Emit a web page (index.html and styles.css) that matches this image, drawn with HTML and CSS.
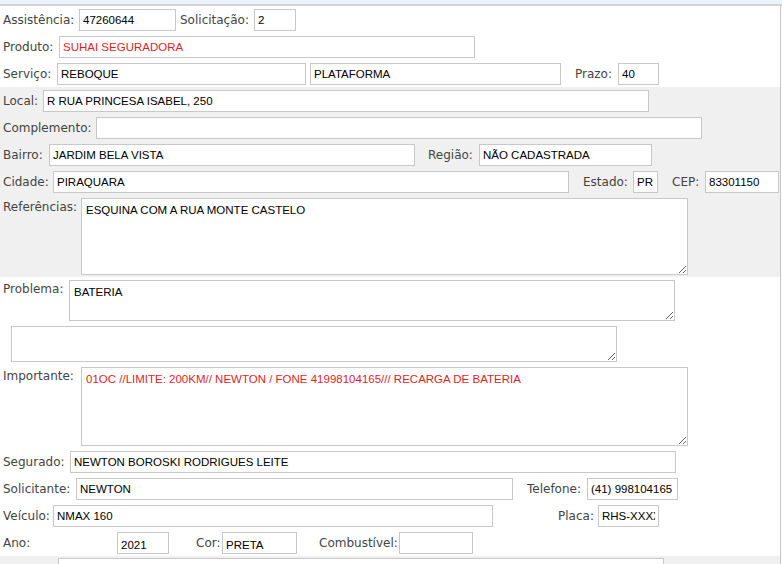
FILE: index.html
```html
<!DOCTYPE html>
<html lang="pt-BR">
<head>
<meta charset="utf-8">
<title>Assistência</title>
<link rel="stylesheet" href="styles.css">
</head>
<body>
<div class="topbar"></div>
<div class="page">
  <div class="sec">
    <div class="row">
      <label class="lbl l-assist">Assistência:</label>
      <input class="f w-assist" value="47260644">
      <label class="lbl l-solic ml4">Solicitação:</label>
      <input class="f w-solic" value="2">
    </div>
    <div class="row">
      <label class="lbl l-prod">Produto:</label>
      <input class="f w-prod red" value="SUHAI SEGURADORA">
    </div>
    <div class="row">
      <label class="lbl l-serv">Serviço:</label>
      <input class="f w-serv1" value="REBOQUE">
      <input class="f w-serv2 ml4" value="PLATAFORMA">
      <label class="lbl l-prazo ml14">Prazo:</label>
      <input class="f w-prazo" value="40">
    </div>
  </div>

  <div class="sec gray">
    <div class="row">
      <label class="lbl l-local">Local:</label>
      <input class="f w-606" value="R RUA PRINCESA ISABEL, 250">
    </div>
    <div class="row">
      <label class="lbl l-compl">Complemento:</label>
      <input class="f w-606" value="">
    </div>
    <div class="row">
      <label class="lbl l-bairro">Bairro:</label>
      <input class="f w-bairro" value="JARDIM BELA VISTA">
      <label class="lbl l-regiao ml13">Região:</label>
      <input class="f w-regiao" value="NÃO CADASTRADA">
    </div>
    <div class="row">
      <label class="lbl l-cidade">Cidade:</label>
      <input class="f w-cidade" value="PIRAQUARA">
      <label class="lbl l-estado ml14">Estado:</label>
      <input class="f w-estado" value="PR">
      <label class="lbl l-cep ml14">CEP:</label>
      <input class="f w-cep" value="83301150">
    </div>
    <div class="row top">
      <label class="lbl l-ref">Referências:</label>
      <textarea class="ta w-607 h-ref">ESQUINA COM A RUA MONTE CASTELO</textarea>
    </div>
  </div>

  <div class="sec">
    <div class="row top">
      <label class="lbl l-prob">Problema:</label>
      <textarea class="ta w-606 h-prob">BATERIA</textarea>
    </div>
    <div class="row top">
      <textarea class="ta w-606 h-blank ml11"></textarea>
    </div>
    <div class="row top">
      <label class="lbl l-imp">Importante:</label>
      <textarea class="ta w-607 h-imp red">01OC //LIMITE: 200KM// NEWTON / FONE 41998104165/// RECARGA DE BATERIA</textarea>
    </div>
    <div class="row">
      <label class="lbl l-seg">Segurado:</label>
      <input class="f w-606" value="NEWTON BOROSKI RODRIGUES LEITE">
    </div>
    <div class="row">
      <label class="lbl l-solicit">Solicitante:</label>
      <input class="f w-solicit" value="NEWTON">
      <label class="lbl l-tel ml14">Telefone:</label>
      <input class="f w-tel" value="(41) 998104165">
    </div>
    <div class="row">
      <label class="lbl l-veic">Veículo:</label>
      <input class="f w-veic" value="NMAX 160">
      <label class="lbl l-placa ml65">Placa:</label>
      <input class="f w-placa" value="RHS-XXXX">
    </div>
    <div class="row">
      <label class="lbl l-ano">Ano:</label>
      <input class="f w-ano low" value="2021">
      <label class="lbl l-cor ml27">Cor:</label>
      <input class="f w-cor low" value="PRETA">
      <label class="lbl l-comb ml22">Combustível:</label>
      <input class="f w-comb" value="">
    </div>
  </div>

  <div class="sec gray last">
    <div class="row">
      <input class="f w-606 ml58" value="">
    </div>
  </div>
</div>
</body>
</html>
```

FILE: styles.css
```css
html, body {
  margin: 0;
  padding: 0;
  background: #ffffff;
}

.topbar {
  height: 4px;
  background: #eaf3fc;
  border-bottom: 2px solid #d3d3d3;
}

.page {
  width: 780px;
  height: 558px;
  border-right: 1px solid #c4c4c4;
  overflow: hidden;
}

.sec {
  display: flex;
  flex-direction: column;
  gap: 5px;
  padding: 3px 0 2px;
}

.sec.gray {
  background: #f0f0f0;
}

.sec.last {
  padding-top: 2px;
  height: 40px;
}

.row {
  display: flex;
  align-items: center;
  height: 22px;
}

.row.top {
  align-items: flex-start;
  height: auto;
}

.lbl {
  flex: none;
  box-sizing: border-box;
  font: 12px "DejaVu Sans", Verdana, sans-serif;
  color: #444444;
  white-space: nowrap;
}

.row > .lbl:first-child {
  margin-left: 3px;
}

.row.top > .lbl {
  padding-top: 2px;
}

.f,
.ta {
  flex: none;
  box-sizing: border-box;
  margin: 0;
  border: 1px solid #c8c8c8;
  border-radius: 0;
  background: #ffffff;
  color: #000000;
  font: 11.5px "Liberation Sans", Arial, sans-serif;
  outline: none;
}

.f {
  height: 22px;
  padding: 0 3px;
}

.f.low {
  padding-top: 3px;
}

.ta {
  display: block;
  padding: 5px 4px;
  line-height: 13px;
  overflow: hidden;
}

.red {
  color: #e01e26;
}

/* spacing */
.ml4 { margin-left: 4px; }
.ml11 { margin-left: 11px; }
.ml13 { margin-left: 13px; }
.ml14 { margin-left: 14px; }
.ml22 { margin-left: 22px; }
.ml27 { margin-left: 27px; }
.ml58 { margin-left: 58px; }
.ml65 { margin-left: 65px; }

/* label widths */
.l-assist { width: 76px; }
.l-solic { width: 74px; }
.l-prod { width: 56px; }
.l-serv { width: 54px; }
.l-prazo { width: 43px; }
.l-local { width: 40px; }
.l-compl { width: 93px; }
.l-bairro { width: 46px; }
.l-regiao { width: 51px; }
.l-cidade { width: 50px; }
.l-estado { width: 50px; }
.l-cep { width: 33px; }
.l-ref { width: 78px; }
.l-prob { width: 66px; }
.l-imp { width: 78px; }
.l-seg { width: 67px; }
.l-solicit { width: 73px; }
.l-tel { width: 60px; }
.l-veic { width: 50px; }
.l-placa { width: 40px; }
.l-ano { width: 114px; }
.l-cor { width: 26px; }
.l-comb { width: 80px; }

/* field widths */
.w-assist { width: 97px; }
.w-solic { width: 42px; }
.w-prod { width: 416px; }
.w-serv1 { width: 249px; }
.w-serv2 { width: 251px; }
.w-prazo { width: 41px; }
.w-606 { width: 606px; }
.w-607 { width: 607px; }
.w-bairro { width: 366px; }
.w-regiao { width: 173px; }
.w-cidade { width: 516px; }
.w-estado { width: 25px; }
.w-cep { width: 74px; }
.w-solicit { width: 437px; }
.w-tel { width: 91px; }
.w-veic { width: 440px; }
.w-placa { width: 61px; }
.w-ano { width: 52px; }
.w-cor { width: 75px; }
.w-comb { width: 74px; }

/* textarea heights */
.h-ref { height: 77px; }
.h-prob { height: 41px; }
.h-blank { height: 36px; }
.h-imp { height: 79px; }
```
